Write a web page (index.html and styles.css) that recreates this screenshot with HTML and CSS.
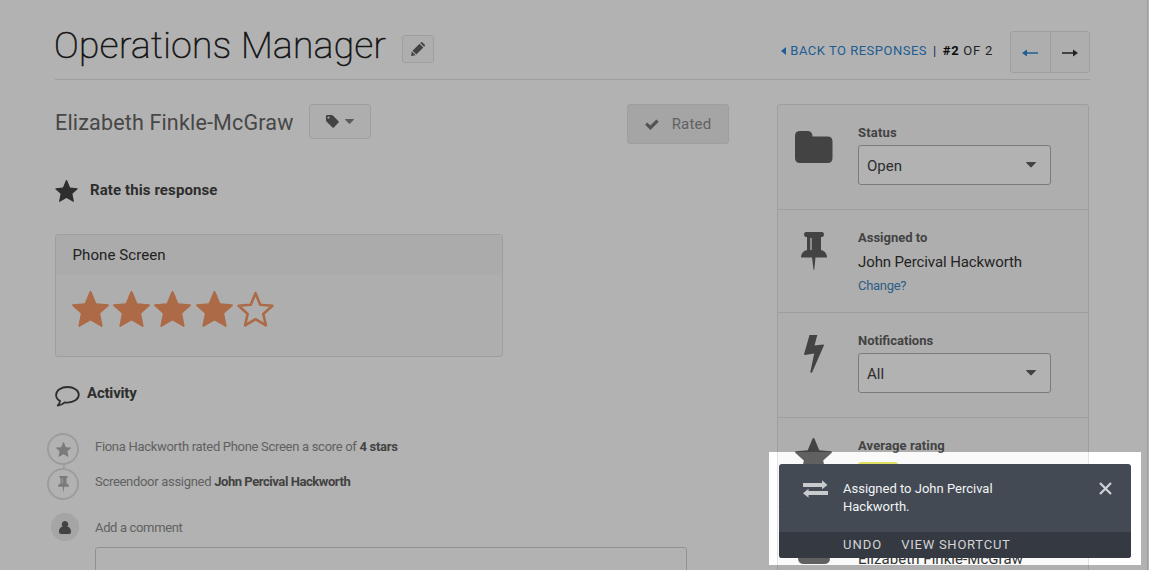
FILE: index.html
```
<!DOCTYPE html>
<html lang="en">
<head>
<meta charset="utf-8">
<title>Operations Manager</title>
<link rel="stylesheet" href="styles.css">
</head>
<body>
<svg class="defs" aria-hidden="true">
  <symbol id="star" viewBox="0 0 37 36"><path d="M18.5 0c.5 0 .9.4 1.100.9l4.700 11.400 11.700 1c1 .1 1.200 1 .5 1.700l-8.300 7.600 2.400 12.200c.1 1-.5 1.400-1.300.9L18.500 29.600 7.700 35.700c-.8.5-1.400.1-1.300-.9l2.400-12.200L.5 15c-.7-.7-.5-1.600.5-1.700l11.700-1L17.400.9c.2-.5.6-.9 1.100-.9z"/></symbol>
  <symbol id="pin" viewBox="0 0 26 38"><path d="M5 0h16c2.600 0 2.600 5 0 5h-1v13c3.500.5 6 3.500 6 7.500H14.500L13.300 37.500c-.1.600-.7.600-.8 0L11 25.500H0C0 21.500 2.500 18.500 6 18V5H5C2.400 5 2.400 0 5 0zM9.300 6v12h1.400V6z" fill-rule="evenodd"/></symbol>
</svg>
<div class="page">
  <header class="header">
    <h1 class="title">Operations Manager</h1>
    <button class="btn edit"><svg width="14" height="14" viewBox="0 0 14 14"><path d="M0 14l.8-4.600 3.800 3.800zM1.500 8.700L8.500 1.700l3.800 3.800-7 7zM9.300.9l.7-.7q.6-.5 1.200 0l2.600 2.600q.5.6 0 1.200l-.7.7z"/></svg></button>
    <nav class="pager">
      <a class="back"><svg width="5" height="8" viewBox="0 0 5 8"><path d="M5 0v8L0 4z"/></svg>BACK TO RESPONSES</a>
      <span class="bar">|</span>
      <span class="count"><b>#2</b> OF 2</span>
      <div class="arrows">
        <a class="prev"><svg width="16" height="8" viewBox="0 0 16 8"><path d="M16 3.300H5V.5L0 4l5 3.500V4.700h11z"/></svg></a>
        <a class="next"><svg width="16" height="8" viewBox="0 0 16 8"><path d="M0 3.300h11V.5L16 4l-5 3.500V4.700H0z"/></svg></a>
      </div>
    </nav>
  </header>
  <div class="columns">
    <main class="main">
      <div class="person">
        <h2 class="name">Elizabeth Finkle-McGraw</h2>
        <button class="btn tag"><svg width="13" height="13" viewBox="0 0 13 13"><path d="M1 0h4.500q.8 0 1.400.6l5.600 5.600q.7.7 0 1.400l-4.600 4.800q-.7.7-1.400 0L.7 6.700Q0 6 0 5.200V1q0-1 1-1zm1.500 1.400a1.100 1.100 0 1 0 .01 0z" fill-rule="evenodd"/></svg><svg class="caret" width="9" height="5" viewBox="0 0 9 5"><path d="M.5 0h8q.8.2.3.8L5.200 4.600q-.7.6-1.400 0L.2.8Q-.3.200.5 0z"/></svg></button>
        <button class="btn rated"><svg width="14" height="11" viewBox="0 0 15 12"><path d="M0 6.200l2.300-2.300L5.700 7.200 12.300.600 14.800 3 5.700 12z"/></svg>Rated</button>
      </div>
      <h3 class="heading rate"><svg width="23" height="22"><use href="#star"/></svg><span>Rate this response</span></h3>
      <section class="card">
        <div class="card-title">Phone Screen</div>
        <div class="stars">
          <svg><use href="#star"/></svg><svg><use href="#star"/></svg><svg><use href="#star"/></svg><svg><use href="#star"/></svg>
          <svg viewBox="0 0 37 36"><path class="hollow" d="M18.500 2.200l4.700 11.600 12.200 1-9.100 8.200 2.600 11.300-10.400-6.100-10.400 6.100L10.700 23 1.600 14.800l12.200-1z"/></svg>
        </div>
      </section>
      <h3 class="heading activity"><svg width="25" height="21" viewBox="0 0 25 21"><path class="bubble" d="M12.500 1C18.700 1 23.800 4.400 23.800 8.800S18.700 16.600 12.500 16.600q-1.300 0-2.800-.3-3 2.900-7 3.300 2.100-2 2.300-4.700-3.900-2.200-3.900-6C1.100 4.400 6.300 1 12.500 1z"/></svg><span>Activity</span></h3>
      <ul class="timeline">
        <li><i class="dot"><svg width="15" height="15"><use href="#star"/></svg></i><span class="event">Fiona Hackworth rated Phone Screen a score of <b class="score">4 stars</b></span></li>
        <li><i class="dot"><svg width="11" height="16"><use href="#pin"/></svg></i><span class="event">Screendoor assigned <b class="who">John Percival Hackworth</b></span></li>
      </ul>
      <div class="comment">
        <i class="avatar"><svg width="12" height="13" viewBox="0 0 12 13"><path d="M6 0a3.200 3.400 0 0 1 2.300 5.800C11 5.800 12 8.500 12 11q0 2-2 2H2q-2 0-2-2C0 8.500 1 5.800 3.700 5.800A3.200 3.400 0 0 1 6 0z"/></svg></i>
        <label>Add a comment</label>
      </div>
      <div class="box"></div>
    </main>
    <aside class="panel">
      <section class="row status">
        <div class="icon"><svg width="38" height="32" viewBox="0 0 38 32"><path d="M5 0h7.500q5 0 5 5.500h15q5 0 5 5V27q0 5-5 5H5q-5 0-5-5V5q0-5 5-5z"/></svg></div>
        <div><div class="label st">Status</div><div class="select">Open<svg width="10" height="6" viewBox="0 0 10 6"><path d="M.5 0h9q.8.200.3.800L5.700 5.100q-.7.600-1.400 0L.2.8Q-.3.200.5 0z"/></svg></div></div>
      </section>
      <section class="row assigned">
        <div class="icon"><svg width="26" height="38"><use href="#pin"/></svg></div>
        <div><div class="label">Assigned to</div><div class="value">John Percival Hackworth</div><a class="change">Change?</a></div>
      </section>
      <section class="row notify">
        <div class="icon"><svg width="20" height="38" viewBox="0 0 20 38"><path d="M5.500 0h7.800L10.500 10.500l8.700-1.100q1 0 .7 1.100L8.300 37q-.4 1-1.300.8-.8-.2-.6-1L10.200 18.500.9 20Q-.1 20 .1 19z"/></svg></div>
        <div><div class="label">Notifications</div><div class="select">All<svg width="10" height="6" viewBox="0 0 10 6"><path d="M.5 0h9q.8.200.3.800L5.700 5.100q-.7.600-1.400 0L.2.8Q-.3.200.5 0z"/></svg></div></div>
      </section>
      <section class="row average">
        <div class="icon"><svg width="37" height="36"><use href="#star"/></svg></div>
        <div><div class="label av">Average rating</div><div class="pill"></div></div>
      </section>
      <section class="row respondent">
        <div class="icon"><svg width="32" height="38" viewBox="0 0 32 38"><path d="M16 0a9 9 0 0 1 6.500 15.500C29 16 32 23 32 32q0 6-6 6H6q-6 0-6-6C0 23 3 16 9.500 15.500A9 9 0 0 1 16 0z"/></svg></div>
        <div class="value eliz">Elizabeth Finkle-McGraw</div>
      </section>
    </aside>
  </div>
</div>
<div class="spotlight"></div>
<div class="toast">
  <div class="toast-body">
    <svg class="swap" width="25" height="18" viewBox="0 0 25 18"><path d="M0 3h19V.200L24.500 5 19 9.300V7H0zM25 11H5.500V8.800L0 13.200l5.500 4.600V15H25z"/></svg>
    <p>Assigned to John Percival<br>Hackworth.</p>
    <svg class="close" width="13" height="13" viewBox="0 0 13 13"><path d="M1 1l11 11M12 1L1 12"/></svg>
  </div>
  <div class="toast-foot"><a class="undo">UNDO</a><a class="view">VIEW SHORTCUT</a></div>
</div>
</body>
</html>
```
FILE: styles.css
```
* { box-sizing: border-box; }
html, body { height: 570px; margin: 0; overflow: hidden; }
body { position: relative; background: #fff; font: 13px/20px Roboto, "Liberation Sans", sans-serif; color: #606060; }
h1, h2, h3, p, ul { margin: 0; padding: 0; font-weight: 400; }
svg { display: block; flex: none; fill: currentColor; overflow: visible; }
.defs { position: absolute; width: 0; height: 0; }

.page { width: 1148px; height: 570px; padding: 0 57px 0 55px; border-right: 1px solid #e3e3e3; overflow: hidden; }
.header { display: flex; align-items: flex-start; height: 80px; border-bottom: 1px solid #e3e3e3; }
.title { margin: 21px 0 0 -1px; width: 333px; white-space: nowrap; font-size: 37px; line-height: 50px; font-weight: 100; letter-spacing: .45px; color: #222; -webkit-text-stroke: .7px #222; }
.btn { display: flex; align-items: center; justify-content: center; padding: 0; border: 1px solid #e3e3e3; border-radius: 3px; background: #fafafa; color: #606060; font: inherit; }
.edit { width: 32px; height: 28px; margin: 35px 0 0 15px; }
.pager { display: flex; margin: 31px 0 0 auto; line-height: 39px; color: #333; letter-spacing: .5px; white-space: nowrap; }
.back { display: flex; align-items: center; height: 39px; gap: 4px; color: #2d86d2; }
.bar { margin-left: 6px; color: #303080; }
.count { margin-left: 6px; letter-spacing: .75px; }
.count b { color: #111; }
.arrows { display: flex; width: 80px; height: 42px; margin-left: 17px; border: 1px solid #e3e3e3; border-radius: 3px; background: #fafafa; }
.arrows a { flex: 1; display: flex; align-items: center; justify-content: center; padding-top: 1px; }
.prev { border-right: 1px solid #e3e3e3; color: #2d86d2; }

.columns { display: flex; justify-content: space-between; padding: 24px 1px 0 0; }
.main { width: 674px; }
.person { display: flex; height: 40px; }
.name { width: 254px; font-size: 21.500px; line-height: 37px; letter-spacing: .17px; white-space: nowrap; color: #666; }
.tag { width: 62px; height: 35px; gap: 6px; }
.caret { color: #858585; }
.rated { width: 102px; height: 40px; margin-left: auto; gap: 13px; background: #ececec; color: #8c8c8c; font-size: 15px; letter-spacing: .2px; }
.rated svg { color: #777; }
.heading { display: flex; font-size: 15px; line-height: 20px; font-weight: 700; color: #424242; }
.rate { height: 54px; margin-top: 36px; gap: 12px; letter-spacing: .1px; }
.activity { height: 40px; margin-top: 26px; gap: 7px; letter-spacing: -.2px; }
.activity svg { margin-top: 3px; }
.bubble { fill: none; stroke: currentColor; stroke-width: 1.800; stroke-linejoin: round; }
.card { width: 448px; height: 123px; border: 1px solid #e3e3e3; border-radius: 3px; background: #fafafa; }
.card-title { height: 40px; padding-left: 16.500px; background: #f5f5f5; font-size: 15px; line-height: 40px; letter-spacing: .09px; color: #303030; }
.stars { display: flex; gap: 4.100px; padding: 16px 0 0 16.300px; color: #f79865; }
.stars svg { width: 37px; height: 36px; }
.hollow { fill: none; stroke: currentColor; stroke-width: 2.600; stroke-linejoin: round; }

.timeline { list-style: none; margin: 10px 0 0 -8px; }
.timeline li { position: relative; display: flex; gap: 16px; height: 35px; }
.timeline li:first-child::after { content: ""; position: absolute; left: 16px; top: 32px; width: 2px; height: 3px; background: #e3e3e3; }
.dot { display: flex; align-items: center; justify-content: center; width: 32px; height: 32px; border: 2px solid #e0e0e0; border-radius: 50%; color: #b0b0b0; }
.event { line-height: 27px; letter-spacing: -.3px; color: #8c8c8c; white-space: nowrap; }
.event b { color: #606060; }
.score { letter-spacing: -.3px; }
.who { letter-spacing: -.44px; }
.comment { display: flex; gap: 16px; margin: 10px 0 0 -4px; height: 34px; line-height: 29px; letter-spacing: -.35px; color: #8c8c8c; }
.avatar { display: flex; align-items: center; justify-content: center; width: 28px; height: 28px; border-radius: 50%; background: #ececec; color: #606060; }
.box { width: 592px; height: 100px; margin-left: 40px; border: 1px solid #d0d0d0; border-radius: 3px; }

.panel { width: 312px; border: 1px solid #e3e3e3; border-radius: 3px; background: #fafafa; }
.row { display: flex; gap: 25px; padding: 18px 0 0 17px; border-bottom: 1px solid #e3e3e3; }
.icon { width: 38px; display: flex; justify-content: center; flex: none; padding-top: 4px; }
.status, .notify { height: 105px; }
.status .icon { padding-top: 8px; }
.assigned { height: 103px; }
.average { height: 89px; }
.average .icon { padding: 2px 1px 0 0; }
.respondent { height: 110px; }
.respondent .icon { padding-top: 1px; }
.label { font-weight: 700; }
.st { letter-spacing: .2px; }
.av { letter-spacing: .12px; }
.select { display: flex; align-items: center; justify-content: space-between; width: 193px; height: 40px; margin-top: 2px; padding: 2px 14px 0 8px; border: 1px solid #b0b0b0; border-radius: 3px; background: #fff; font-size: 15px; color: #424242; }
.select svg { margin-top: -3px; color: #606060; }
.value { margin-top: 4px; font-size: 15px; letter-spacing: -.1px; color: #333; white-space: nowrap; }
.respondent .eliz { margin-top: 24px; letter-spacing: .06px; }
.change { display: block; margin-top: 4px; letter-spacing: -.3px; color: #3f88bf; }
.pill { width: 40px; height: 20px; margin-top: 6px; border-radius: 3px; background: #e0e060; }

.spotlight { position: absolute; left: 769px; top: 452px; width: 372px; height: 113px; box-shadow: 0 0 0 1200px rgba(0, 0, 0, .3); }
.toast { position: absolute; left: 779px; top: 464px; width: 352px; height: 94px; border-radius: 3px; overflow: hidden; background: #434a54; color: #f2f3f4; }
.toast-body { display: flex; height: 68px; padding: 16px 19px 0 24px; }
.toast-body p { margin-left: 15px; line-height: 18px; }
.swap { color: #c8cacd; }
.close { margin: 2px 0 0 auto; fill: none; stroke: #d0d2d5; stroke-width: 2.200; }
.toast-foot { display: flex; gap: 19px; height: 26px; padding-left: 64px; line-height: 26px; background: #353942; color: #d2d4d6; }
.undo { letter-spacing: 1px; }
.view { letter-spacing: .75px; }
```
